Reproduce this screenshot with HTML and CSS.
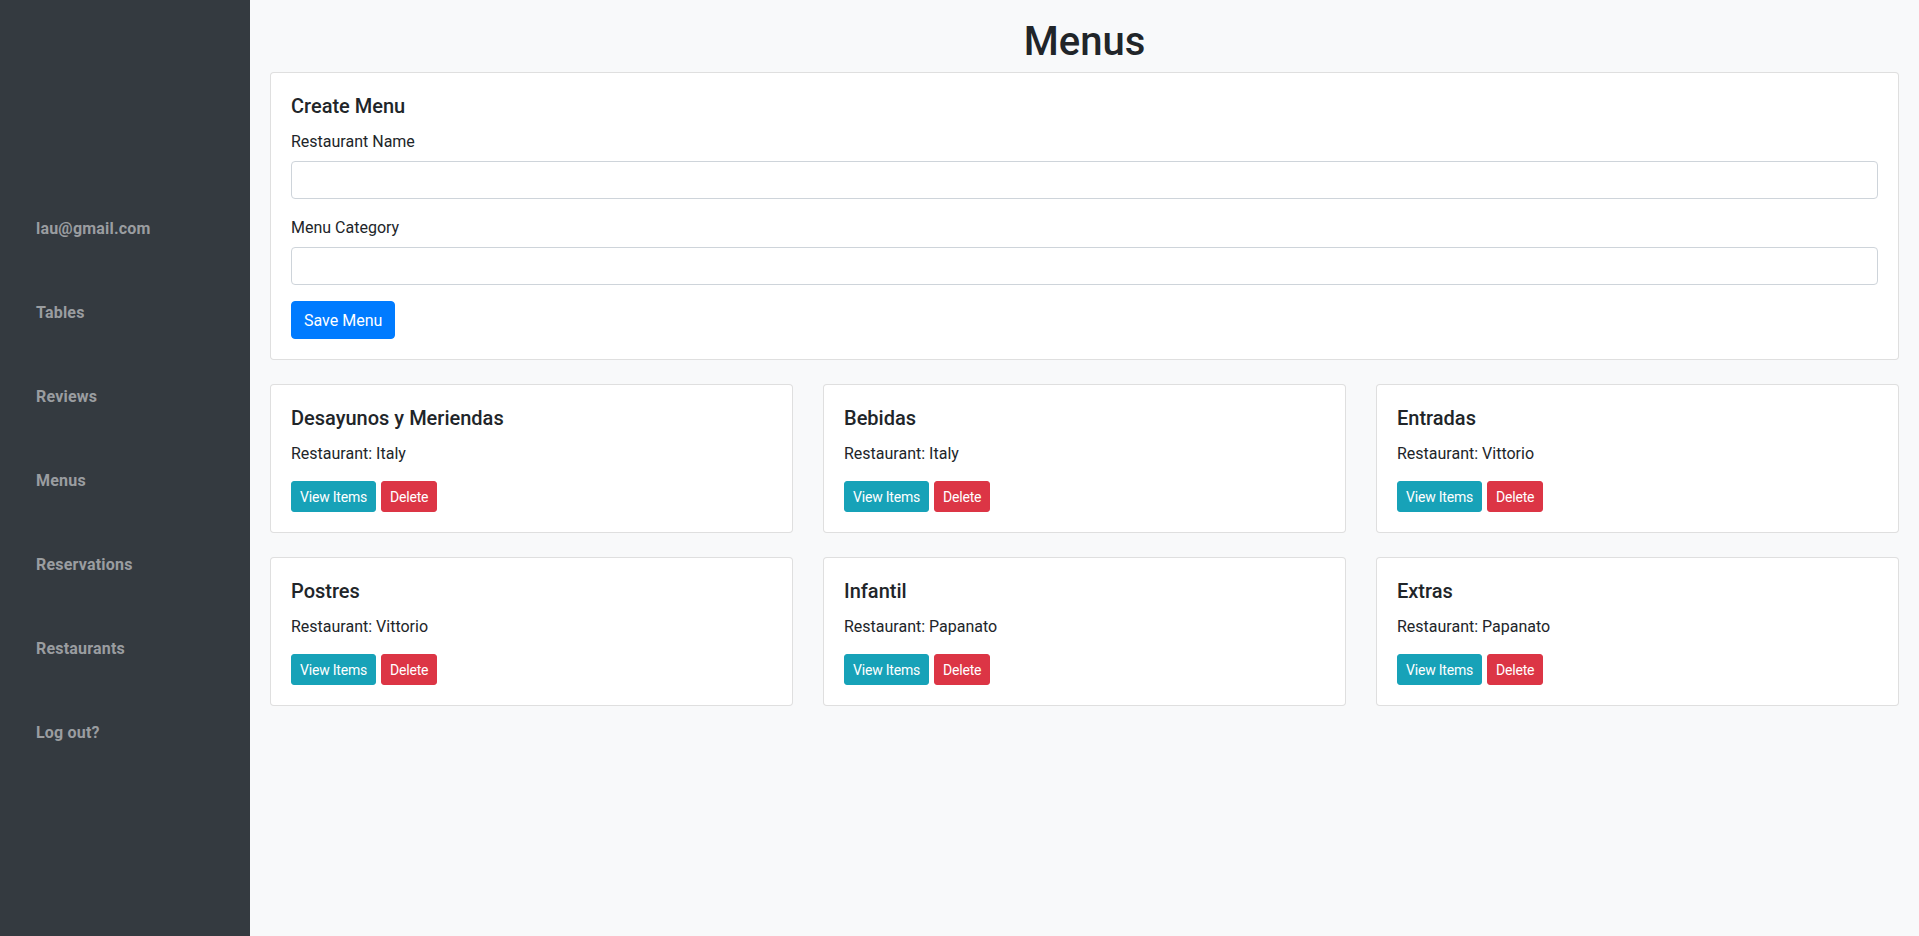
FILE: index.html
```html
<!DOCTYPE html>
<html lang="en">
<head>
<meta charset="utf-8">
<title>Menus</title>
<link rel="stylesheet" href="styles.css">
</head>
<body>
<div class="layout">
  <aside class="sidebar">
    <nav class="side-nav">
      <a class="side-link" href="#">lau@gmail.com</a>
      <a class="side-link" href="#">Tables</a>
      <a class="side-link" href="#">Reviews</a>
      <a class="side-link" href="#">Menus</a>
      <a class="side-link" href="#">Reservations</a>
      <a class="side-link" href="#">Restaurants</a>
      <a class="side-link" href="#">Log out?</a>
    </nav>
  </aside>
  <main class="main">
    <h1 class="page-title">Menus</h1>
    <section class="card create-card">
      <div class="card-body">
        <h5 class="card-title">Create Menu</h5>
        <form class="form">
          <div class="form-group">
            <label class="form-label" for="rname">Restaurant Name</label>
            <input class="form-control" id="rname" type="text">
          </div>
          <div class="form-group">
            <label class="form-label" for="mcat">Menu Category</label>
            <input class="form-control" id="mcat" type="text">
          </div>
          <button class="btn btn-primary" type="button">Save Menu</button>
        </form>
      </div>
    </section>
    <div class="menu-grid">
      <div class="card menu-card"><div class="card-body">
        <h5 class="card-title">Desayunos y Meriendas</h5>
        <p class="card-text">Restaurant: Italy</p>
        <div class="btn-row"><button class="btn btn-sm btn-info">View Items</button><button class="btn btn-sm btn-danger">Delete</button></div>
      </div></div>
      <div class="card menu-card"><div class="card-body">
        <h5 class="card-title">Bebidas</h5>
        <p class="card-text">Restaurant: Italy</p>
        <div class="btn-row"><button class="btn btn-sm btn-info">View Items</button><button class="btn btn-sm btn-danger">Delete</button></div>
      </div></div>
      <div class="card menu-card"><div class="card-body">
        <h5 class="card-title">Entradas</h5>
        <p class="card-text">Restaurant: Vittorio</p>
        <div class="btn-row"><button class="btn btn-sm btn-info">View Items</button><button class="btn btn-sm btn-danger">Delete</button></div>
      </div></div>
      <div class="card menu-card"><div class="card-body">
        <h5 class="card-title">Postres</h5>
        <p class="card-text">Restaurant: Vittorio</p>
        <div class="btn-row"><button class="btn btn-sm btn-info">View Items</button><button class="btn btn-sm btn-danger">Delete</button></div>
      </div></div>
      <div class="card menu-card"><div class="card-body">
        <h5 class="card-title">Infantil</h5>
        <p class="card-text">Restaurant: Papanato</p>
        <div class="btn-row"><button class="btn btn-sm btn-info">View Items</button><button class="btn btn-sm btn-danger">Delete</button></div>
      </div></div>
      <div class="card menu-card"><div class="card-body">
        <h5 class="card-title">Extras</h5>
        <p class="card-text">Restaurant: Papanato</p>
        <div class="btn-row"><button class="btn btn-sm btn-info">View Items</button><button class="btn btn-sm btn-danger">Delete</button></div>
      </div></div>
    </div>
  </main>
</div>
</body>
</html>
```

FILE: styles.css
```css
* { box-sizing: border-box; }

html, body {
  margin: 0;
  padding: 0;
  height: 100%;
}

body {
  font-family: Roboto, "Liberation Sans", sans-serif;
  font-size: 16px;
  line-height: 1.5;
  color: #212529;
  background: #f8f9fa;
}

.layout {
  display: flex;
  min-height: 100vh;
}

.sidebar {
  width: 250px;
  flex: 0 0 250px;
  background: #343a40;
  min-height: 100vh;
}

.side-nav {
  display: flex;
  flex-direction: column;
  padding-top: 187px;
}

.side-link {
  display: block;
  padding: 30px 36px;
  line-height: 24px;
  font-size: 16px;
  font-weight: 700;
  color: #9a9da0;
  text-decoration: none;
  letter-spacing: 0.2px;
}

.main {
  flex: 1;
  padding: 16px 20px 0 20px;
}

.page-title {
  margin: 0 0 8px 0;
  font-size: 40px;
  line-height: 48px;
  font-weight: 500;
  text-align: center;
  padding-top: 2px;
  height: 48px;
}

.card {
  background: #fff;
  border: 1px solid rgba(0, 0, 0, 0.125);
  border-radius: 4px;
}

.card-body {
  padding: 20px;
}

.create-card {
  margin-bottom: 24px;
}

.card-title {
  margin: 0 0 11px 0;
  padding-top: 1px;
  font-size: 20px;
  line-height: 24px;
  font-weight: 500;
}

.form-group {
  margin-bottom: 16px;
}

.form-label {
  display: inline-block;
  padding-top: 1px;
  margin-bottom: 7px;
  line-height: 24px;
}

.form-control {
  display: block;
  width: 100%;
  height: 38px;
  padding: 6px 12px;
  font: inherit;
  color: #495057;
  background: #fff;
  border: 1px solid #ced4da;
  border-radius: 4px;
}

.btn {
  display: inline-block;
  font-family: inherit;
  font-weight: 400;
  color: #fff;
  text-align: center;
  border: 1px solid transparent;
  cursor: pointer;
}

.btn-primary {
  padding: 7px 12px 5px 12px;
  font-size: 16px;
  line-height: 24px;
  border-radius: 4px;
  background: #007bff;
  border-color: #007bff;
}

.btn-sm {
  padding: 5px 8px 3px 8px;
  font-size: 14px;
  line-height: 21px;
  border-radius: 3px;
  letter-spacing: -0.2px;
}

.btn-info {
  background: #17a2b8;
  border-color: #17a2b8;
}

.btn-danger {
  background: #dc3545;
  border-color: #dc3545;
}

.menu-grid {
  display: grid;
  grid-template-columns: repeat(3, 1fr);
  column-gap: 30px;
  row-gap: 24px;
}

.card-text {
  margin: 0 0 15px 0;
  padding-top: 1px;
  line-height: 24px;
}

.btn-row {
  display: flex;
  gap: 5px;
}
```
